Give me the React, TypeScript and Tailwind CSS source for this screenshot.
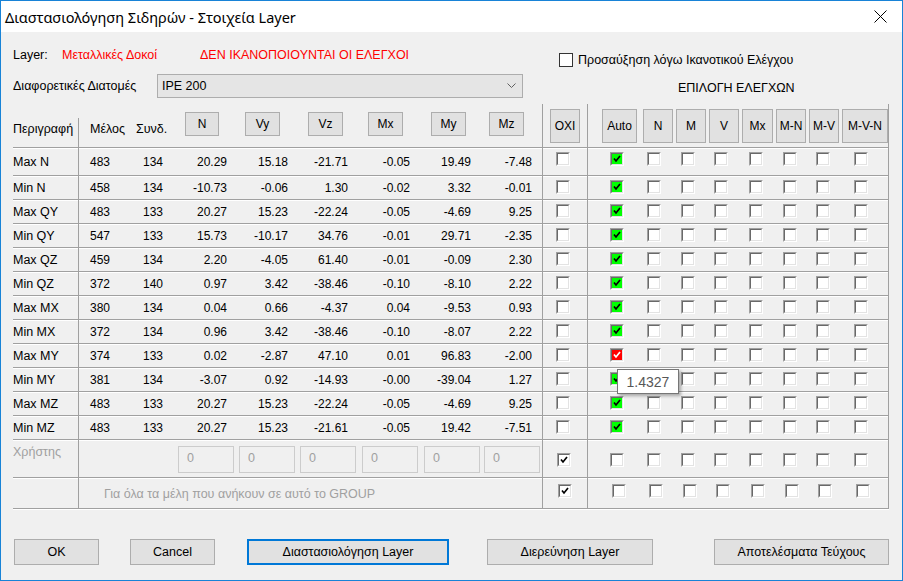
import React from "react";

type Row = [string, string, string, string, string, string, string, string, string];

const rows: Row[] = [
  ["Max N", "483", "134", "20.29", "15.18", "-21.71", "-0.05", "19.49", "-7.48"],
  ["Min N", "458", "134", "-10.73", "-0.06", "1.30", "-0.02", "3.32", "-0.01"],
  ["Max QY", "483", "133", "20.27", "15.23", "-22.24", "-0.05", "-4.69", "9.25"],
  ["Min QY", "547", "133", "15.73", "-10.17", "34.76", "-0.01", "29.71", "-2.35"],
  ["Max QZ", "459", "134", "2.20", "-4.05", "61.40", "-0.01", "-0.09", "2.30"],
  ["Min QZ", "372", "140", "0.97", "3.42", "-38.46", "-0.10", "-8.10", "2.22"],
  ["Max MX", "380", "134", "0.04", "0.66", "-4.37", "0.04", "-9.53", "0.93"],
  ["Min MX", "372", "134", "0.96", "3.42", "-38.46", "-0.10", "-8.07", "2.22"],
  ["Max MY", "374", "133", "0.02", "-2.87", "47.10", "0.01", "96.83", "-2.00"],
  ["Min MY", "381", "134", "-3.07", "0.92", "-14.93", "-0.00", "-39.04", "1.27"],
  ["Max MZ", "483", "133", "20.27", "15.23", "-22.24", "-0.05", "-4.69", "9.25"],
  ["Min MZ", "483", "133", "20.27", "15.23", "-21.61", "-0.05", "19.42", "-7.51"],
];

// widths of the numeric cells after Μέλος
const numWidths = ["w-[33px]", "w-[64px]", "w-[61px]", "w-[60px]", "w-[62px]", "w-[61px]", "w-[61px]"];

// left offsets of the check columns (Auto, N, M, V, Mx, M-N, M-V, M-V-N)
const cbMargins = ["ml-[22px]", "ml-[23px]", "ml-[20px]", "ml-[19px]", "ml-[21px]", "ml-[20px]", "ml-[19px]", "ml-[24px]"];

const leftButtons = [
  { label: "N", cls: "ml-0 w-[34px]" },
  { label: "Vy", cls: "ml-[26px] w-[35px]" },
  { label: "Vz", cls: "ml-[28px] w-[35px]" },
  { label: "Mx", cls: "ml-[25px] w-[35px]" },
  { label: "My", cls: "ml-[28px] w-[35px]" },
  { label: "Mz", cls: "ml-[23px] w-[35px]" },
];

const rightButtons = [
  { label: "Auto", cls: "ml-[14px] w-[35px]" },
  { label: "N", cls: "ml-[6px] w-[30px]" },
  { label: "M", cls: "ml-[3px] w-[30px]" },
  { label: "V", cls: "ml-[3px] w-[30px]" },
  { label: "Mx", cls: "ml-[3px] w-[31px]" },
  { label: "M-N", cls: "ml-[3px] w-[30px]" },
  { label: "M-V", cls: "ml-[3px] w-[30px]" },
  { label: "M-V-N", cls: "ml-[3px] w-[46px]" },
];

const inputMargins = ["ml-[99px]", "ml-[5px]", "ml-[5px]", "ml-[6px]", "ml-[6px]", "ml-[4px]"];

function Check({ color = "black" }: { color?: string }) {
  return (
    <svg width="10" height="10" viewBox="0 0 10 10">
      <polyline points="2,4.5 4,7 8,2" fill="none" stroke={color} strokeWidth="1.7" />
    </svg>
  );
}

function Box({ state = "off", className = "" }: { state?: "off" | "on" | "green" | "red"; className?: string }) {
  const bg = state === "green" ? "bg-[#00ff00]" : state === "red" ? "bg-[#ff0000]" : "bg-white";
  return (
    <span
      className={`block w-[14px] h-[14px] shrink-0 border border-t-[#a0a0a0] border-l-[#a0a0a0] border-r-white border-b-white ${className}`}
    >
      <span
        className={`flex items-center justify-center w-[12px] h-[12px] border border-t-[#696969] border-l-[#696969] border-r-[#e3e3e3] border-b-[#e3e3e3] ${bg}`}
      >
        {state === "on" && <Check />}
        {state === "green" && <Check />}
        {state === "red" && <Check color="white" />}
      </span>
    </span>
  );
}

function HeadButton({ label, className }: { label: string; className: string }) {
  return (
    <div className={`flex items-center justify-center bg-[#e1e1e1] border border-[#adadad] ${className}`}>
      {label}
    </div>
  );
}

function CheckCells({ auto, top, shift = "" }: { auto?: "green" | "red"; top: string; shift?: string }) {
  return (
    <div className={`w-[302px] border-l border-r border-[#a0a0a0] flex items-start ${top} ${shift}`}>
      {cbMargins.map((m, i) => (
        <Box key={i} className={m} state={i === 0 && auto ? auto : "off"} />
      ))}
    </div>
  );
}

export default function App() {
  return (
    <div className="w-[903px] h-[581px] relative overflow-hidden border border-[#1883d7] bg-[#f0f0f0] font-['Liberation_Sans',Arial,sans-serif] text-[12.5px] leading-[14px] text-black">
      {/* title bar */}
      <div className="h-[31px] bg-white flex items-center pl-[4px] pr-[15px]">
        <span className="font-['Noto_Sans',sans-serif] text-[14.5px] leading-[20px] flex-1">
          Διαστασιολόγηση Σιδηρών - Στοιχεία Layer
        </span>
        <svg width="13" height="13" viewBox="0 0 13 13">
          <path d="M0.5 0.5 L12.5 12.5 M12.5 0.5 L0.5 12.5" stroke="black" strokeWidth="1" />
        </svg>
      </div>

      {/* top area */}
      <div className="flex pl-[12px] mt-[16px]">
        <div className="w-[510px]">
          <div className="flex h-[14px]">
            <span className="w-[49px]">Layer:</span>
            <span className="w-[138px] text-[#ff0000]">Μεταλλικές Δοκοί</span>
            <span className="text-[#ff0000]">ΔΕΝ ΙΚΑΝΟΠΟΙΟΥΝΤΑΙ ΟΙ ΕΛΕΓΧΟΙ</span>
          </div>
          <div className="flex items-center mt-[12px] h-[24px]">
            <span className="w-[144px]">Διαφορετικές Διατομές</span>
            <div className="flex-1 h-[24px] bg-[#e5e5e5] border border-[#adadad] flex items-center pl-[4px] pr-[6px]">
              <span className="flex-1">IPE 200</span>
              <svg width="9" height="6" viewBox="0 0 9 6">
                <polyline points="0.5,0.5 4.5,4.5 8.5,0.5" fill="none" stroke="#606060" strokeWidth="1" />
              </svg>
            </div>
          </div>
        </div>
        <div className="ml-[36px]">
          <div className="flex items-center mt-[5px]">
            <span className="w-[14px] h-[14px] border border-[#333] bg-white" />
            <span className="ml-[5px]">Προσαύξηση λόγω Ικανοτικού Ελέγχου</span>
          </div>
          <div className="ml-[119px] mt-[14px]">ΕΠΙΛΟΓΗ ΕΛΕΓΧΩΝ</div>
        </div>
      </div>

      {/* table */}
      <div className="ml-[12px] w-[876px] mt-[6px]">
        {/* header */}
        <div className="flex h-[44px] border-b border-[#a0a0a0] shadow-[0_1px_0_#fff]">
          <div className="w-[66px] mt-[14px] border-r border-[#a0a0a0] pt-[4px]">Περιγραφή</div>
          <div className="w-[463px] flex items-start">
            <span className="ml-[11px] mt-[18px] w-[46px]">Μέλος</span>
            <span className="mt-[18px] w-[49px]">Συνδ.</span>
            {leftButtons.map((b) => (
              <HeadButton key={b.label} label={b.label} className={`${b.cls} h-[24px] mt-[8px] text-[12px]`} />
            ))}
          </div>
          <div className="w-[45px] border-l border-[#a0a0a0] flex items-start">
            <HeadButton label="OXI" className="ml-[7px] w-[30px] h-[34px] mt-[5px] text-[12px]" />
          </div>
          <div className="w-[302px] border-l border-r border-[#a0a0a0] flex items-start">
            {rightButtons.map((b) => (
              <HeadButton key={b.label} label={b.label} className={`${b.cls} h-[34px] mt-[5px] text-[12px]`} />
            ))}
          </div>
        </div>

        {/* data rows */}
        {rows.map((r, ri) => (
          <div
            key={r[0]}
            className={`flex ${ri === 0 ? "h-[28px]" : "h-[24px]"} border-b border-[#a0a0a0] shadow-[0_1px_0_#fff]`}
          >
            <div className="w-[66px] border-r border-[#a0a0a0] flex items-center">{r[0]}</div>
            <div className="w-[463px] flex items-center text-[12px]">
              <span className="w-[51px] pl-[11px]">{r[1]}</span>
              {r.slice(2).map((v, i) => (
                <span key={i} className={`${numWidths[i]} text-right`}>
                  {v}
                </span>
              ))}
            </div>
            <div className="w-[45px] border-l border-[#a0a0a0] flex items-start pt-[4px]">
              <Box className="ml-[13px]" />
            </div>
            <CheckCells auto={r[0] === "Max MY" ? "red" : "green"} top="pt-[4px]" />
          </div>
        ))}

        {/* user row */}
        <div className="flex h-[38px] border-b border-[#a0a0a0] shadow-[0_1px_0_#fff]">
          <div className="w-[66px] border-r border-[#a0a0a0] pt-[5px] text-[#a0a0a0]">Χρήστης</div>
          <div className="w-[463px] flex items-start">
            {inputMargins.map((m, i) => (
              <div
                key={i}
                className={`${m} mt-[6px] w-[56px] h-[27px] border border-[#cccccc] pl-[8px] pt-[4px] text-[#a0a0a0]`}
              >
                0
              </div>
            ))}
          </div>
          <div className="w-[45px] border-l border-[#a0a0a0] flex items-start pt-[13px]">
            <Box className="ml-[14px]" state="on" />
          </div>
          <CheckCells top="pt-[13px]" />
        </div>

        {/* group row */}
        <div className="flex h-[31px] border-b border-[#a0a0a0] shadow-[0_1px_0_#fff]">
          <div className="w-[66px] border-r border-[#a0a0a0]" />
          <div className="w-[463px] pl-[25px] pt-[9px] text-[#a0a0a0]">
            Για όλα τα μέλη που ανήκουν σε αυτό το GROUP
          </div>
          <div className="w-[45px] border-l border-[#a0a0a0] flex items-start pt-[6px]">
            <Box className="ml-[15px]" state="on" />
          </div>
          <CheckCells top="pt-[6px]" shift="pl-[2px]" />
        </div>
      </div>

      {/* bottom buttons */}
      <div className="flex mt-[30px] h-[26px]">
        <button className="ml-[13px] w-[85px] h-[26px] bg-[#e1e1e1] border border-[#adadad]">OK</button>
        <button className="ml-[31px] w-[85px] h-[26px] bg-[#e1e1e1] border border-[#adadad]">Cancel</button>
        <button className="ml-[32px] w-[202px] h-[26px] bg-[#e1e1e1] border-2 border-[#0078d7]">
          Διαστασιολόγηση Layer
        </button>
        <button className="ml-[38px] w-[166px] h-[26px] bg-[#e1e1e1] border border-[#adadad]">
          Διερεύνηση Layer
        </button>
        <button className="ml-[61px] w-[175px] h-[26px] bg-[#e1e1e1] border border-[#adadad]">
          Αποτελέσματα Τεύχους
        </button>
      </div>

      {/* tooltip */}
      <div className="absolute left-[616px] top-[368px] w-[62px] h-[25px] bg-white border border-[#767676] shadow-[2px_2px_3px_rgba(0,0,0,0.3)] flex items-center justify-center text-[14px] text-[#575757]">
        1.4327
      </div>
    </div>
  );
}
